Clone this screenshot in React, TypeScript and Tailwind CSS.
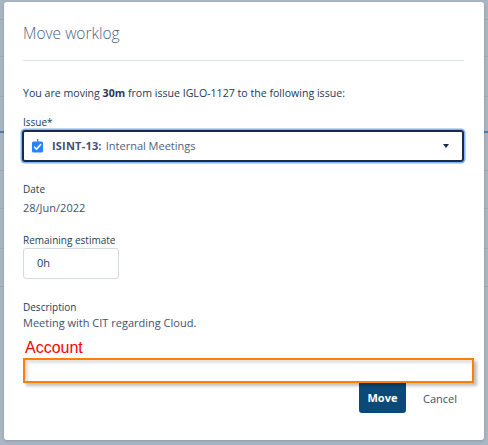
import React from "react";

function CheckIcon() {
  return (
    <svg width="11" height="14" viewBox="0 0 11 14">
      <rect x="5" y="0" width="1.2" height="3" fill="#2684ff" />
      <rect x="0" y="2.5" width="11" height="11" rx="1.5" fill="#2684ff" />
      <path d="M2.6 8.2 L4.6 10.2 L8.6 5.6" stroke="#fff" strokeWidth="1.6" fill="none" strokeLinecap="round" strokeLinejoin="round" />
    </svg>
  );
}

export default function App() {
  const font = { fontFamily: '"Open Sans", "Noto Sans", sans-serif' };
  return (
    <div className="relative w-[488px] h-[445px] overflow-hidden bg-[#a8b5c2]" style={font}>
      {/* background page fragments */}
      <div className="flex flex-col">
        <div className="h-[20px] border-b border-[#9aa8b6]" />
        <div className="h-[37px] border-b border-[#9aa8b6]" />
        <div className="h-[40px] border-b border-[#9aa8b6]" />
        <div className="h-[36px] border-b-2 border-[#4a7fb0]" />
        <div className="h-[38px] border-b border-[#9aa8b6]" />
        <div className="h-[38px] border-b border-[#9aa8b6]" />
        <div className="h-[40px] border-b border-[#9aa8b6]" />
        <div className="h-[38px] border-b border-[#9aa8b6]" />
      </div>

      {/* modal */}
      <div className="absolute left-[4px] top-[2px] w-[480px] h-[438px] bg-white rounded-[3px] shadow-[0_1px_3px_rgba(0,0,0,0.15)] pl-[19px] pr-[20px] pt-[20px]">
        <h2 className="text-[15.5px] leading-[22px] text-[#505f79] font-light">Move worklog</h2>
        <div className="mt-[16px] h-px bg-[#dfe5ec]" />

        <p className="mt-[25px] text-[10.6px] leading-[15px] text-[#253858]">
          You are moving <span className="font-bold">30m</span> from issue IGLO-1127 to the following issue:
        </p>

        <div className="mt-[15px] text-[10px] leading-[13px] text-[#1c3d5a]">Issue*</div>
        <div className="mt-[1px] h-[32px] -ml-[1px] rounded-[3px] border-2 border-[#172b4d] shadow-[0_0_0_1.5px_#7fb2ff] flex items-center pl-[8px] pr-[13px]">
          <CheckIcon />
          <span className="ml-[9px] text-[11px] font-bold text-[#42526e] tracking-[0.2px]">ISINT-13:</span>
          <span className="ml-[4px] text-[11px] text-[#505f79]">Internal Meetings</span>
          <span className="ml-auto w-0 h-0 border-l-[3.5px] border-r-[3.5px] border-t-[4px] border-l-transparent border-r-transparent border-t-[#172b4d]" />
        </div>

        <div className="mt-[21px] text-[10px] leading-[13px] text-[#1c3d5a]">Date</div>
        <div className="mt-[4px] text-[11px] leading-[15px] text-[#42526e]">28/Jun/2022</div>

        <div className="mt-[19px] text-[10px] leading-[13px] text-[#1c3d5a]">Remaining estimate</div>
        <div className="mt-[1px] w-[96px] h-[31px] rounded-[3px] border border-[#d5dbe2] flex items-center pl-[13px] text-[11px] text-[#253858]">0h</div>

        <div className="mt-[22px] text-[10px] leading-[13px] text-[#1c3d5a]">Description</div>
        <div className="mt-[1px] text-[11px] leading-[15px] text-[#42526e]">Meeting with CIT regarding Cloud.</div>

        <div className="mt-[9px] ml-[2px] text-[16px] leading-[18px] text-[#ff0000]" style={{ fontFamily: '"Liberation Sans", Arial, sans-serif' }}>Account</div>
        <div className="relative z-10 mt-[1px] w-[451px] h-[25px] border-2 border-[#ff8000] bg-white shadow-[3px_3px_3px_rgba(0,0,0,0.25),inset_3px_3px_3px_rgba(0,0,0,0.12)]" />

        <div className="flex justify-end items-start pr-[7px]">
          <button className="w-[47px] h-[30px] bg-[#0b4a77] rounded-b-[3px] text-white text-[11px] font-bold pt-[1px]">Move</button>
          <span className="ml-[17px] mt-[8px] text-[11px] text-[#42526e]">Cancel</span>
        </div>
      </div>
    </div>
  );
}
